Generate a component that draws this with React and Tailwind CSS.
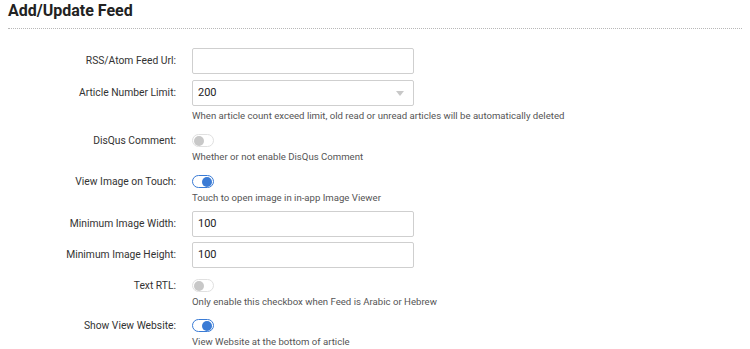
import React from 'react';

const font = { fontFamily: 'Roboto, "Liberation Sans", sans-serif' };

function Toggle({ on }) {
  return (
    <div
      className={`w-[22px] h-[13px] rounded-full border flex items-center px-[1px] ${
        on ? 'border-[#3a7bd5] justify-end bg-white' : 'border-[#e0e0e0] justify-start bg-white'
      }`}
    >
      <div className={`w-[10px] h-[10px] rounded-full ${on ? 'bg-[#3a7bd5]' : 'bg-[#c8c8c8]'}`} />
    </div>
  );
}

function TextInput({ value }) {
  return (
    <div className="w-[222px] h-[26px] border border-[#cfcfcf] rounded-[2px] bg-white flex items-center px-[5px] text-[11px] text-[#222]">
      {value}
    </div>
  );
}

function Help({ children }) {
  return <div className="text-[9.6px] text-[#555] mt-[3px] leading-[13px]">{children}</div>;
}

export default function App() {
  return (
    <div style={font} className="w-[750px] h-[349px] bg-white overflow-hidden">
      <div className="px-[8px] pt-[1px]">
        <h2 className="text-[16px] font-bold text-[#222] leading-[20px]">Add/Update Feed</h2>
        <div className="mt-[7px] border-t border-dotted border-[#b8b8b8] w-[734px]" />
      </div>

      <div className="flex flex-col pt-[19px]">
        <div className="flex items-center">
          <div className="w-[176px] text-right text-[10.3px] text-[#333]">RSS/Atom Feed Url:</div>
          <div className="ml-[16px]"><TextInput value="" /></div>
        </div>

        <div className="flex mt-[6px]">
          <div className="w-[176px] text-right text-[10.3px] text-[#333] h-[26px] flex items-center justify-end">Article Number Limit:</div>
          <div className="ml-[16px] flex flex-col">
            <div className="w-[222px] h-[26px] border border-[#cfcfcf] rounded-[2px] bg-white flex items-center justify-between px-[5px] text-[11px] text-[#222]">
              <span>200</span>
              <svg width="8" height="5" viewBox="0 0 8 5" className="mr-[4px]"><path d="M0 0 L8 0 L4 5 Z" fill="#c8c8c8" /></svg>
            </div>
            <Help>When article count exceed limit, old read or unread articles will be automatically deleted</Help>
          </div>
        </div>

        <div className="flex mt-[12px]">
          <div className="w-[176px] text-right text-[10.3px] text-[#333] h-[14px] flex items-center justify-end">DisQus Comment:</div>
          <div className="ml-[16px] flex flex-col">
            <Toggle on={false} />
            <Help>Whether or not enable DisQus Comment</Help>
          </div>
        </div>

        <div className="flex mt-[12px]">
          <div className="w-[176px] text-right text-[10.3px] text-[#333] h-[14px] flex items-center justify-end">View Image on Touch:</div>
          <div className="ml-[16px] flex flex-col">
            <Toggle on={true} />
            <Help>Touch to open image in in-app Image Viewer</Help>
          </div>
        </div>

        <div className="flex items-center mt-[7px]">
          <div className="w-[176px] text-right text-[10.3px] text-[#333]">Minimum Image Width:</div>
          <div className="ml-[16px]"><TextInput value="100" /></div>
        </div>

        <div className="flex items-center mt-[5px]">
          <div className="w-[176px] text-right text-[10.3px] text-[#333]">Minimum Image Height:</div>
          <div className="ml-[16px]"><TextInput value="100" /></div>
        </div>

        <div className="flex mt-[11px]">
          <div className="w-[176px] text-right text-[10.3px] text-[#333] h-[14px] flex items-center justify-end">Text RTL:</div>
          <div className="ml-[16px] flex flex-col">
            <Toggle on={false} />
            <Help>Only enable this checkbox when Feed is Arabic or Hebrew</Help>
          </div>
        </div>

        <div className="flex mt-[11px]">
          <div className="w-[176px] text-right text-[10.3px] text-[#333] h-[14px] flex items-center justify-end">Show View Website:</div>
          <div className="ml-[16px] flex flex-col">
            <Toggle on={true} />
            <Help>View Website at the bottom of article</Help>
          </div>
        </div>
      </div>
    </div>
  );
}
